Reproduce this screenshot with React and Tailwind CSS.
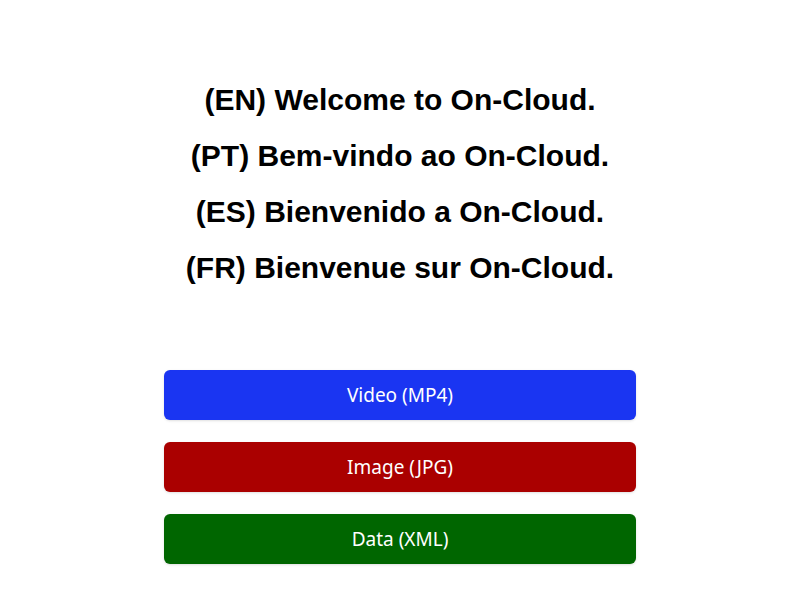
import React from 'react';

const buttons = [
    { label: 'Video (MP4)', color: 'bg-[#1a35f2]' },
    { label: 'Image (JPG)', color: 'bg-[#aa0000]' },
    { label: 'Data (XML)', color: 'bg-[#006600]' },
];

const greetings = [
    '(EN) Welcome to On-Cloud.',
    '(PT) Bem-vindo ao On-Cloud.',
    '(ES) Bienvenido a On-Cloud.',
    '(FR) Bienvenue sur On-Cloud.',
];

export default function App() {
    return (
        <div className="w-[800px] h-[600px] bg-white flex flex-col items-center">
            {/* Greetings */}
            <div className="mt-[72px] flex flex-col items-center font-['Liberation_Sans',Arial,sans-serif] font-bold text-[30px] leading-[56px] text-black">
                {greetings.map((g) => (
                    <h1 key={g}>{g}</h1>
                ))}
            </div>

            {/* Download buttons */}
            <div className="mt-[74px] w-[472px] flex flex-col gap-[22px]">
                {buttons.map((b) => (
                    <button
                        key={b.label}
                        className={`${b.color} h-[50px] w-full rounded-[6px] shadow-sm text-white text-[19px] font-['Noto_Sans',sans-serif]`}
                    >
                        {b.label}
                    </button>
                ))}
            </div>
        </div>
    );
}
